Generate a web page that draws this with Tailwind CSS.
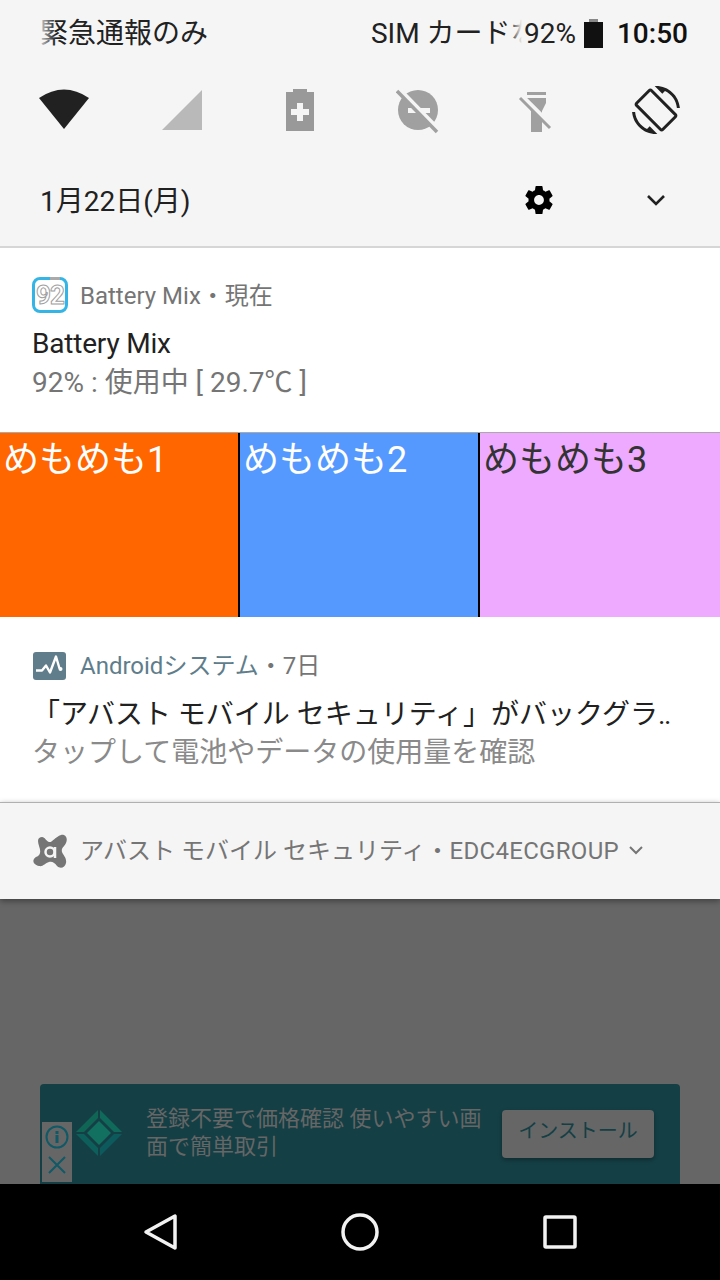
<!DOCTYPE html>
<html lang="ja">

<head>
    <meta charset="UTF-8">
    <meta name="viewport" content="width=device-width, initial-scale=1.0">
    <title>Notifications</title>
    <script src="https://cdn.jsdelivr.net/npm/@tailwindcss/browser@4"></script>
</head>

<body class="w-[720px] h-[1280px] overflow-hidden flex flex-col bg-[#666666] font-['Roboto','Noto_Sans_CJK_JP',sans-serif]">

    <!-- Quick settings header -->
    <header class="h-[248px] shrink-0 bg-[#f5f5f5] border-b-2 border-[#d6d6d6] flex flex-col">
        <div class="h-[66px] flex items-center pl-[40px] pr-[32px] text-[28px] text-[#212121]">
            <div class="relative leading-none mt-[2px]">
                <span>緊急通報のみ</span>
                <div class="absolute left-0 top-0 bottom-0 w-[16px] bg-gradient-to-r from-[#f5f5f5]/80 to-transparent"></div>
            </div>
            <div class="ml-auto flex items-center">
                <div class="relative w-[151px] h-[34px] mt-[2px] overflow-hidden whitespace-nowrap leading-[34px]">
                    <span>SIM カードなし</span>
                    <div class="absolute right-0 top-0 bottom-0 w-[12px] bg-gradient-to-r from-transparent to-[#f5f5f5]"></div>
                </div>
                <span class="leading-none ml-[2px] mt-[2px]">92%</span>
                <svg class="ml-[8px]" width="19" height="29" viewBox="0 0 19 29">
                    <path d="M5 0h9v3h5v26H0V3h5z" fill="#111"/>
                    <path d="M5 0h9v3H5z" fill="#888"/>
                </svg>
                <span class="ml-[14px] mt-[2px] font-medium text-[#111]">10:50</span>
            </div>
        </div>

        <!-- Tile icons -->
        <div class="h-[88px] relative flex items-center">
            <svg class="absolute left-[38px] top-[22px]" width="52" height="42" viewBox="0 0 52 42">
                <path d="M1 10 Q26 -7 51 10 L26 41z" fill="#212121"/>
            </svg>
            <svg class="absolute left-[162px] top-[24px]" width="40" height="40" viewBox="0 0 40 40">
                <path d="M40 0v40H0z" fill="#b9b9b9"/>
            </svg>
            <svg class="absolute left-[286px] top-[23px]" width="28" height="42" viewBox="0 0 28 42">
                <path d="M7 0h14v3h7v39H0V3h7z" fill="#999"/>
                <path d="M11 14h6v6h6v6h-6v6h-6v-6H5v-6h6z" fill="#f5f5f5"/>
            </svg>
            <svg class="absolute left-[396px] top-[23px]" width="44" height="46" viewBox="0 0 44 46">
                <circle cx="22" cy="21" r="20" fill="#a0a0a0"/>
                <path d="M12 19h22v5H12z" fill="#f5f5f5"/>
                <path d="M3 1l40 41" stroke="#f5f5f5" stroke-width="6"/>
                <path d="M1 2l40 41" stroke="#a0a0a0" stroke-width="3.5"/>
            </svg>
            <svg class="absolute left-[518px] top-[24px]" width="36" height="44" viewBox="0 0 36 44">
                <path d="M9 2h19v3H9zM9 8h19v5l-4 8v21H13V21l-4-8z" fill="#a0a0a0"/>
                <path d="M3 6l31 31" stroke="#f5f5f5" stroke-width="6"/>
                <path d="M2 8l30 30" stroke="#a0a0a0" stroke-width="3"/>
            </svg>
            <svg class="absolute left-[632px] top-[20px]" width="48" height="48" viewBox="0 0 24 24" fill="#212121">
                <path d="M16.48 2.52c3.27 1.55 5.61 4.72 5.97 8.48h1.5C23.44 4.84 18.29 0 12 0l-.66.03 3.81 3.81 1.33-1.32zm-6.25-.77c-.59-.59-1.54-.59-2.12 0L1.75 8.11c-.59.59-.59 1.54 0 2.12l12.02 12.02c.59.59 1.54.59 2.12 0l6.36-6.36c.59-.59.59-1.54 0-2.12L10.23 1.75zm4.6 19.44L2.81 9.17l6.36-6.36 12.02 12.02-6.36 6.36zm-7.31.29C4.25 19.94 1.91 16.76 1.55 13H.05C.56 19.16 5.71 24 12 24l.66-.03-3.81-3.81-1.33 1.32z"/>
            </svg>
        </div>

        <div class="flex-1 relative flex items-center pl-[40px] pt-[4px] text-[28px] text-[#212121]">
            <span>1月22日(月)</span>
            <svg class="absolute left-[525px] top-[32px]" width="28" height="28" viewBox="2 2 20 20" fill="#000">
                <path d="M19.43 12.98c.04-.32.07-.64.07-.98s-.03-.66-.07-.98l2.11-1.65c.19-.15.24-.42.12-.64l-2-3.46c-.12-.22-.39-.3-.61-.22l-2.49 1c-.52-.4-1.08-.73-1.69-.98l-.38-2.65C14.46 2.18 14.25 2 14 2h-4c-.25 0-.46.18-.49.42l-.38 2.65c-.61.25-1.17.59-1.69.98l-2.49-1c-.23-.09-.49 0-.61.22l-2 3.46c-.13.22-.07.49.12.64l2.11 1.65c-.04.32-.07.65-.07.98s.03.66.07.98l-2.11 1.65c-.19.15-.24.42-.12.64l2 3.46c.12.22.39.3.61.22l2.49-1c.52.4 1.08.73 1.69.98l.38 2.65c.03.24.24.42.49.42h4c.25 0 .46-.18.49-.42l.38-2.65c.61-.25 1.17-.59 1.69-.98l2.49 1c.23.09.49 0 .61-.22l2-3.46c.12-.22.07-.49-.12-.64l-2.11-1.65zM12 15.5c-1.93 0-3.5-1.57-3.5-3.5s1.57-3.5 3.5-3.5 3.5 1.57 3.5 3.5-1.57 3.5-3.5 3.5z"/>
            </svg>
            <svg class="absolute left-[646px] top-[40px]" width="20" height="14" viewBox="0 0 20 14" fill="none" stroke="#212121" stroke-width="2.6">
                <path d="M2 2l8 8 8-8"/>
            </svg>
        </div>
    </header>

    <!-- Battery Mix notification -->
    <section class="h-[184px] shrink-0 bg-white pl-[32px] pt-[30px]">
        <div class="flex items-center h-[36px]">
            <div class="relative mt-[-2px] w-[36px] h-[36px] rounded-[8px] border-[3px] border-[#35b5e5] flex items-center justify-center">
                <div class="absolute left-[15px] top-[-3px] w-[10px] h-[3px] bg-[#aaaaaa]"></div>
                <span class="text-[26px] font-bold text-white leading-none tracking-[-1px] [-webkit-text-stroke:1px_#a0a0a0]">92</span>
            </div>
            <span class="ml-[12px] text-[24px] text-[#757575]">Battery Mix・現在</span>
        </div>
        <p class="mt-[11px] text-[28px] leading-[38px] text-[#212121] tracking-[-0.2px]">Battery Mix</p>
        <p class="mt-[1px] text-[28px] leading-[38px] text-[#757575]">92% : 使用中 [ 29.7℃ ]</p>
    </section>

    <!-- Colored custom notification -->
    <section class="h-[185px] shrink-0 grid grid-cols-3 text-[36px] leading-[54px] border-t border-[#aaaaaa]">
        <div class="bg-[#ff6600] text-white pl-[3px] border-r-2 border-black">めもめも1</div>
        <div class="bg-[#5599ff] text-white pl-[3px] border-r-2 border-black">めもめも2</div>
        <div class="bg-[#eeaaff] text-[#333333] pl-[3px]">めもめも3</div>
    </section>

    <!-- Android system notification -->
    <section class="h-[185px] shrink-0 bg-white pl-[33px] pt-[31px]">
        <div class="flex items-center h-[36px]">
            <svg width="33" height="28" viewBox="0 0 33 28">
                <rect width="33" height="28" rx="3" fill="#607d8b"/>
                <path d="M3 18.500h6l4-5 4 7 6-16 3.500 12" fill="none" stroke="#fff" stroke-width="2.400" stroke-linejoin="round"/>
                <circle cx="27.500" cy="17" r="2" fill="#fff"/>
            </svg>
            <span class="ml-[14px] text-[24px] text-[#607d8b]">Androidシステム</span>
            <span class="text-[24px] text-[#757575]">・7日</span>
        </div>
        <p class="mt-[11px] ml-[-1px] text-[28px] leading-[39px] text-[#212121] whitespace-nowrap">「アバスト モバイル セキュリティ」がバックグラ‥</p>
        <p class="ml-[-1px] text-[28px] leading-[38px] text-[#8a8a8a] whitespace-nowrap">タップして電池やデータの使用量を確認</p>
    </section>

    <!-- Collapsed group footer -->
    <section class="h-[97px] shrink-0 bg-[#f5f5f5] border-t border-[#b0b0b0] flex items-center pl-[33px] pb-[1px] shadow-[0_2px_6px_rgba(0,0,0,0.4)] z-10">
        <svg width="34" height="34" viewBox="0 0 34 34">
            <path d="M9 3C12 3 13 7 16 8C19 9 22 3 28 1C33 0 35 5 33 9C31 13 28 14 29 18C30 21 34 24 33 29C32 34 27 35 24 32C22 29 19 27 16 28C12 29 10 33 6 32C2 31 -1 28 1 25C3 22 6 23 7 19C8 15 5 11 5 7C5 4 7 3 9 3Z" fill="#757575"/>
            <circle cx="17" cy="18" r="4.500" fill="none" stroke="#f5f5f5" stroke-width="2.500"/>
            <path d="M22 13v11" stroke="#f5f5f5" stroke-width="2.500"/>
        </svg>
        <span class="ml-[13px] text-[24px] text-[#757575] whitespace-nowrap">アバスト モバイル セキュリティ・<span class="tracking-[0.3px]">EDC4ECGROUP</span></span>
        <svg class="ml-[9px]" width="16" height="10" viewBox="0 0 16 10" fill="none" stroke="#757575" stroke-width="2">
            <path d="M2 1l6 6 6-6"/>
        </svg>
    </section>

    <!-- Dimmed app content behind the shade -->
    <main class="flex-1 flex flex-col justify-end px-[40px]">
        <div class="relative h-[100px] bg-[#143f45] rounded-t-[4px] flex items-center">
            <div class="absolute left-[2px] top-[38px] w-[30px] h-[60px] bg-[#666666] flex flex-col items-center">
                <svg width="24" height="24" viewBox="0 0 24 24" class="mt-[3px]">
                    <circle cx="12" cy="12" r="10.500" fill="none" stroke="#0f5a66" stroke-width="2"/>
                    <path d="M10.500 10h3v8h-3zM10.500 6h3v3h-3z" fill="#0f5a66"/>
                </svg>
                <svg width="20" height="20" viewBox="0 0 20 20" class="mt-[6px]">
                    <path d="M2 2l16 16M18 2L2 18" stroke="#0f5a66" stroke-width="2"/>
                </svg>
            </div>
            <svg class="absolute left-[35px] top-[25px]" width="48" height="48" viewBox="0 0 48 48">
                <path d="M23 1L1 23h8l14-14z" fill="#0f6655"/>
                <path d="M25 1l22 22h-8L25 9z" fill="#0f6a5c"/>
                <path d="M23 47L1 25h8l14 14z" fill="#0d5f5c"/>
                <path d="M25 47l22-22h-8L25 39z" fill="#0c5a5c"/>
                <path d="M24 12l12 12-12 12-12-12z" fill="#127060"/>
            </svg>
            <p class="ml-[106px] w-[340px] text-[22px] leading-[28px] text-[#666666] mb-[2px]">登録不要で価格確認 使いやすい画面で簡単取引</p>
            <div class="ml-[16px] w-[152px] h-[48px] pb-[6px] rounded-[4px] bg-[#666666] text-[#143f45] text-[20px] flex items-center justify-center shadow-[0_2px_4px_rgba(0,0,0,0.3)]">インストール</div>
        </div>
    </main>

    <!-- Navigation bar -->
    <nav class="h-[96px] shrink-0 bg-black relative">
        <svg class="absolute left-[143px] top-[29px]" width="36" height="38" viewBox="0 0 36 38" fill="none" stroke="#f2f2f2" stroke-width="3.500" stroke-linejoin="round">
            <path d="M32 3v32L3 19z"/>
        </svg>
        <svg class="absolute left-[341px] top-[29px]" width="38" height="38" viewBox="0 0 38 38" fill="none" stroke="#f2f2f2" stroke-width="3.500">
            <circle cx="19" cy="19" r="17"/>
        </svg>
        <svg class="absolute left-[543px] top-[31px]" width="34" height="34" viewBox="0 0 34 34" fill="none" stroke="#f2f2f2" stroke-width="3.500" stroke-linejoin="round">
            <rect x="2" y="2" width="30" height="30" rx="1"/>
        </svg>
    </nav>
</body>

</html>
